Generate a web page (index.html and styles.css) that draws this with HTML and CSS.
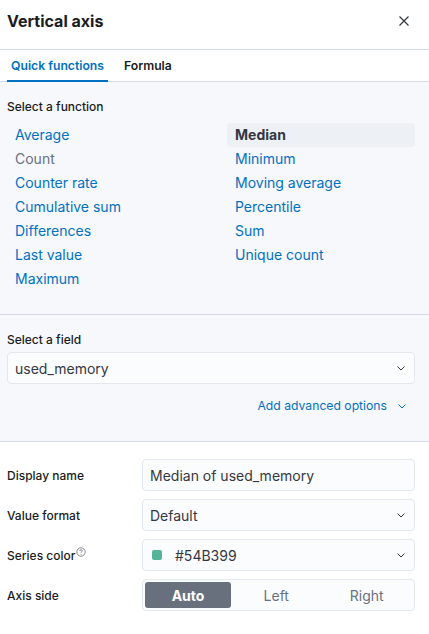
FILE: index.html
```html
<!DOCTYPE html>
<html>
<head>
<meta charset="utf-8">
<link rel="stylesheet" href="styles.css">
</head>
<body>
<div class="flyout">
  <div class="header">
    <h2 class="title">Vertical axis</h2>
    <button class="close" aria-label="Close">
      <svg width="16" height="16" viewBox="0 0 16 16"><path d="M3.5 3.5l9 9M12.5 3.5l-9 9" stroke="#343741" stroke-width="1.2" fill="none"/></svg>
    </button>
  </div>
  <div class="tabs">
    <div class="tab active">Quick functions</div>
    <div class="tab">Formula</div>
  </div>
  <div class="section functions">
    <div class="label">Select a function</div>
    <div class="fn-grid">
      <div class="fn-col">
        <div class="fn">Average</div>
        <div class="fn muted">Count</div>
        <div class="fn">Counter rate</div>
        <div class="fn">Cumulative sum</div>
        <div class="fn">Differences</div>
        <div class="fn">Last value</div>
        <div class="fn">Maximum</div>
      </div>
      <div class="fn-col">
        <div class="fn selected">Median</div>
        <div class="fn">Minimum</div>
        <div class="fn">Moving average</div>
        <div class="fn">Percentile</div>
        <div class="fn">Sum</div>
        <div class="fn">Unique count</div>
      </div>
    </div>
  </div>
  <div class="section field">
    <div class="label">Select a field</div>
    <div class="input select">
      <span>used_memory</span>
      <svg class="chev" width="12" height="12" viewBox="0 0 12 12"><path d="M2.5 4.5l3.5 3.5 3.5-3.5" stroke="#343741" stroke-width="1" fill="none"/></svg>
    </div>
    <div class="advanced">
      <span>Add advanced options</span>
      <svg class="chev" width="12" height="12" viewBox="0 0 12 12"><path d="M2.5 4.5l3.5 3.5 3.5-3.5" stroke="#0071c2" stroke-width="1" fill="none"/></svg>
    </div>
  </div>
  <div class="section form">
    <div class="row">
      <div class="row-label">Display name</div>
      <div class="input"><span>Median of used_memory</span></div>
    </div>
    <div class="row">
      <div class="row-label">Value format</div>
      <div class="input select">
        <span>Default</span>
        <svg class="chev" width="12" height="12" viewBox="0 0 12 12"><path d="M2.5 4.5l3.5 3.5 3.5-3.5" stroke="#343741" stroke-width="1" fill="none"/></svg>
      </div>
    </div>
    <div class="row">
      <div class="row-label">Series color<svg class="help" width="10" height="10" viewBox="0 0 10 10"><circle cx="5" cy="5" r="4.2" stroke="#69707d" stroke-width="0.8" fill="none"/><path d="M3.7 4c0-.8.6-1.3 1.3-1.3s1.3.5 1.3 1.2c0 .9-1.2 1-1.2 1.8" stroke="#69707d" stroke-width="0.8" fill="none"/><circle cx="5.1" cy="7.2" r="0.5" fill="#69707d"/></svg></div>
      <div class="input select">
        <span class="color"><span class="swatch"></span>#54B399</span>
        <svg class="chev" width="12" height="12" viewBox="0 0 12 12"><path d="M2.5 4.5l3.5 3.5 3.5-3.5" stroke="#343741" stroke-width="1" fill="none"/></svg>
      </div>
    </div>
    <div class="row">
      <div class="row-label">Axis side</div>
      <div class="group">
        <div class="seg on">Auto</div>
        <div class="seg">Left</div>
        <div class="seg">Right</div>
      </div>
    </div>
  </div>
</div>
</body>
</html>
```

FILE: styles.css
```css
* { box-sizing: border-box; }
body {
  margin: 0;
  font-family: Inter, "Noto Sans", sans-serif;
  color: #343741;
  background: #fff;
}
.flyout { width: 429px; }
.header {
  height: 50px;
  display: flex;
  align-items: center;
  justify-content: space-between;
  padding: 0 17px 7px 7px;
  border-bottom: 1px solid #d3dae6;
}
.title {
  margin: 0;
  font-size: 16px;
  font-weight: 700;
  color: #1a1c21;
}
.close {
  border: 0;
  background: none;
  padding: 0;
  width: 16px;
  height: 16px;
  display: flex;
}
.tabs {
  display: flex;
  gap: 12px;
  padding: 0 7px;
  height: 32px;
  border-bottom: 1px solid #d3dae6;
}
.tab {
  padding: 0 4px;
  font-size: 12.2px;
  font-weight: 600;
  color: #1a1c21;
  display: flex;
  align-items: center;
  margin-bottom: -1px;
  border-bottom: 2px solid transparent;
}
.tab.active {
  color: #0071c2;
  border-bottom-color: #0071c2;
}
.section {
  padding: 0 14px 0 7px;
}
.functions {
  background: #f7f8fc;
  padding-top: 17px;
  padding-bottom: 23px;
  border-bottom: 1px solid #d3dae6;
}
.label {
  font-size: 12px;
  font-weight: 500;
  color: #1a1c21;
  line-height: 16px;
}
.functions .label { margin-bottom: 8px; }
.fn-grid {
  display: grid;
  grid-template-columns: 1fr 1fr;
  column-gap: 32px;
}
.fn {
  height: 24px;
  line-height: 24px;
  padding: 0 8px;
  font-size: 14px;
  color: #0071c2;
  border-radius: 4px;
}
.fn.muted { color: #69707d; }
.fn.selected {
  background: #edf0f5;
  color: #343741;
  font-weight: 700;
}
.field {
  background: #f7f8fc;
  padding-top: 17px;
  padding-bottom: 28px;
  border-bottom: 1px solid #d3dae6;
}
.field .label { margin-bottom: 4px; }
.input {
  height: 32px;
  background: #fbfcfd;
  border: 1px solid #e3e7ee;
  border-radius: 4px;
  display: flex;
  align-items: center;
  justify-content: space-between;
  padding: 0 7px;
  font-size: 14px;
  color: #343741;
  flex: 1;
}
.chev { flex: none; }
.advanced {
  margin-top: 14px;
  display: flex;
  justify-content: flex-end;
  align-items: center;
  gap: 9px;
  padding-right: 7px;
  font-size: 12.2px;
  color: #0071c2;
}
.form {
  padding-top: 17px;
  display: flex;
  flex-direction: column;
  gap: 8px;
}
.row {
  display: flex;
  align-items: center;
}
.row-label {
  width: 135px;
  flex: none;
  font-size: 12px;
  font-weight: 500;
  color: #1a1c21;
  display: flex;
  align-items: flex-start;
}
.help { margin-left: 1px; margin-top: -1px; }
.color { display: flex; align-items: center; }
.swatch {
  width: 10px;
  height: 10px;
  border-radius: 2px;
  background: #54b399;
  margin-left: 2px;
  margin-right: 13px;
}
.group {
  flex: 1;
  height: 32px;
  background: #fbfcfd;
  border: 1px solid #e3e7ee;
  border-radius: 4px;
  padding: 2px;
  display: grid;
  grid-template-columns: 86px 1fr 1fr;
}
.seg {
  display: flex;
  align-items: center;
  justify-content: center;
  font-size: 14px;
  color: #69707d;
  border-radius: 3px;
}
.seg.on {
  background: #69707d;
  color: #fff;
  font-weight: 700;
}
```
